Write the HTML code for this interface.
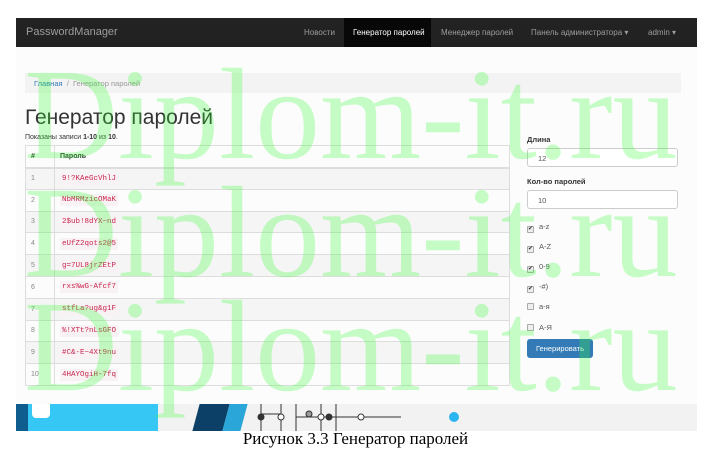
<!DOCTYPE html>
<html><head><meta charset="utf-8"><style>
*{margin:0;padding:0;box-sizing:border-box}
body{width:711px;height:460px;background:#fff;position:relative;overflow:hidden;font-family:"Liberation Sans",sans-serif}
.shot{position:absolute;left:16px;top:18px;width:681px;height:413px;background:#fcfcfc;overflow:hidden}
.nav{position:absolute;left:0;top:0;width:681px;height:29px;background:#222;color:#9d9d9d;font-size:8px}
.nav .brand{position:absolute;left:10px;top:8px;font-size:11px;color:#9d9d9d}
.nav span{position:absolute;top:10px}
.nav .act{background:#080808;color:#fff;top:0;height:29px;padding-top:10px;padding-left:9px;width:87px}
.bc{position:absolute;left:9px;top:55px;width:656px;height:20px;background:#f3f3f3;font-size:7.5px;color:#999;padding:6px 9px}
.bc a{color:#337ab7}
h1{position:absolute;left:9px;top:88px;font-size:21px;font-weight:normal;color:#333}
.info{position:absolute;left:9px;top:116px;font-size:7px;color:#333}
table{position:absolute;left:9px;top:127px;width:485px;border-collapse:collapse;font-size:7px;color:#333}
td,th{border:1px solid #ddd;height:21.8px;padding:0 5px;text-align:left}
th{height:22px;border-bottom:2px solid #ddd}
tr:nth-child(even) td{background:#f5f5f5}
td:first-child{width:29px;color:#888}
code{font-family:"Liberation Mono",monospace;font-size:7.5px;color:#c7254e;background:#f9f2f4;padding:2px 2px}
.lab{position:absolute;left:511px;font-size:7.5px;font-weight:bold;color:#333}
.inp{position:absolute;left:511px;width:151px;height:19px;border:1px solid #ccc;border-radius:3px;background:#fff;font-size:7.5px;color:#555;padding:5px 10px}
.cb{position:absolute;left:511px;font-size:7.5px;color:#555}
.cb i{display:inline-block;width:7px;height:7px;border:1px solid #aaa;border-radius:1px;margin-right:5px;vertical-align:-1px;font-style:normal;font-size:6px;line-height:5px;color:#333;background:#eee}
.btn{position:absolute;left:511px;top:321px;width:66px;height:19px;background:#337ab7;color:#fff;border-radius:3px;font-size:7.5px;text-align:center;padding-top:5px}
.wm{position:absolute;left:24px;font-family:"Liberation Serif",serif;font-size:130px;color:#3f3;opacity:.27;white-space:nowrap;line-height:1}
.strip{position:absolute;left:0;top:386px;width:681px;height:27px;background:#f2f2f2}
.cap{position:absolute;left:0;top:429px;width:711px;text-align:center;font-family:"Liberation Serif",serif;font-size:17px;color:#000}
</style></head><body>
<div class="shot">
<div class="strip">
<div style="position:absolute;left:0;top:0;width:12px;height:27px;background:#0f5c8e"></div>
<div style="position:absolute;left:12px;top:0;width:30px;height:27px;background:#37c7f5"></div>
<div style="position:absolute;left:16px;top:0;width:18px;height:14px;background:#fff;border-radius:0 0 4px 4px"></div>
<div style="position:absolute;left:42px;top:0;width:100px;height:27px;background:#37c7f5"></div>
<div style="position:absolute;left:180px;top:0;width:30px;height:27px;background:#0c4066;transform:skewX(-15deg)"></div>
<div style="position:absolute;left:210px;top:0;width:18px;height:27px;background:#2aa7d8;transform:skewX(-15deg)"></div>
<svg style="position:absolute;left:235px;top:0" width="220" height="27"><g stroke="#333" fill="none" stroke-width="1"><path d="M10 0v27M30 0v27M45 0v27M10 10h20M45 13h45M70 0v27M85 0v27M90 13h60"/><circle cx="10" cy="13" r="3" fill="#333"/><circle cx="30" cy="13" r="3" fill="#fff"/><circle cx="58" cy="10" r="3" fill="#999"/><circle cx="70" cy="13" r="3" fill="#fff"/><circle cx="78" cy="13" r="3" fill="#333"/><circle cx="110" cy="13" r="3" fill="#fff"/></g><circle cx="203" cy="13" r="5" fill="#2bb5f0"/></svg>
</div>
<div class="nav"><div class="brand">PasswordManager</div>
<span style="left:288px">Новости</span>
<span class="act" style="left:328px">Генератор паролей</span>
<span style="left:425px">Менеджер паролей</span>
<span style="left:515px">Панель администратора ▾</span>
<span style="left:632px">admin ▾</span></div>
<div class="bc"><a>Главная</a> &nbsp;/&nbsp; Генератор паролей</div>
<h1>Генератор паролей</h1>
<div class="info">Показаны записи <b>1-10</b> из <b>10</b>.</div>
<table>
<tr><th>#</th><th>Пароль</th></tr>
<tr><td>1</td><td><code>9!?KAeGcVhlJ</code></td></tr>
<tr><td>2</td><td><code>NbMRMzicOMaK</code></td></tr>
<tr><td>3</td><td><code>2$ub!8dYX~nd</code></td></tr>
<tr><td>4</td><td><code>eUfZ2qots2@5</code></td></tr>
<tr><td>5</td><td><code>g=7UL8jrZEtP</code></td></tr>
<tr><td>6</td><td><code>rxs%wG-Afcf7</code></td></tr>
<tr><td>7</td><td><code>stfLa?ug&amp;g1F</code></td></tr>
<tr><td>8</td><td><code>%!XTt?nLsGFO</code></td></tr>
<tr><td>9</td><td><code>#C&amp;-E~4Xt9nu</code></td></tr>
<tr><td>10</td><td><code>4HAYOgiH-7fq</code></td></tr>
</table>
<div class="lab" style="top:117px">Длина</div>
<div class="inp" style="top:130px">12</div>
<div class="lab" style="top:159px">Кол-во паролей</div>
<div class="inp" style="top:172px">10</div>
<div class="cb" style="top:204px"><i>✔</i>a-z</div>
<div class="cb" style="top:224px"><i>✔</i>A-Z</div>
<div class="cb" style="top:244px"><i>✔</i>0-9</div>
<div class="cb" style="top:264px"><i>✔</i>-#)</div>
<div class="cb" style="top:284px"><i></i>а-я</div>
<div class="cb" style="top:305px"><i></i>А-Я</div>
<div class="btn">Генерировать</div>
</div>
<div class="wm" style="top:50px">Diplom-it.ru</div>
<div class="wm" style="top:168px">Diplom-it.ru</div>
<div class="wm" style="top:282px">Diplom-it.ru</div>
<div class="cap">Рисунок 3.3 Генератор паролей</div>
</body></html>
